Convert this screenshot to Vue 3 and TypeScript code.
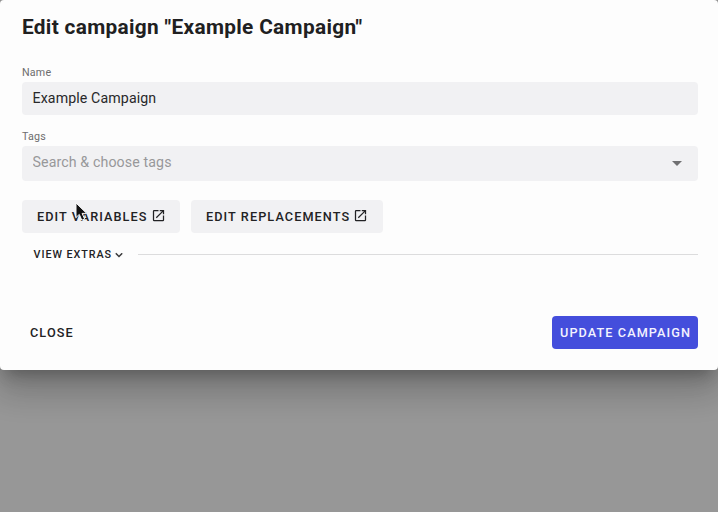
<script setup lang="ts">
import { ref } from 'vue'

interface Action {
  label: string
  kind: string
}

const campaignName = ref('Example Campaign')
const tagQuery = ref('')
const actions: Action[] = [
  { label: 'Edit variables', kind: 'variables' },
  { label: 'Edit replacements', kind: 'replacements' },
]
</script>

<template>
  <div class="backdrop">
    <section class="dialog" role="dialog">
      <h1 class="title">Edit campaign "{{ campaignName }}"</h1>

      <label class="label" for="name">Name</label>
      <div class="field name-field">
        <input id="name" v-model="campaignName" class="input" type="text" />
      </div>

      <label class="label tags-label" for="tags">Tags</label>
      <div class="field tags-field">
        <input id="tags" v-model="tagQuery" class="input" type="text" placeholder="Search &amp; choose tags" />
        <svg class="caret" viewBox="0 0 10 5"><path d="M0 0h10L5 5z" /></svg>
      </div>

      <div class="actions">
        <button v-for="a in actions" :key="a.kind" class="button tonal" :class="a.kind" type="button">
          <span>{{ a.label }}</span>
          <svg class="open-icon" viewBox="0 0 24 24">
            <path d="M14 3v2h3.59l-9.83 9.83 1.41 1.41L19 6.41V10h2V3m-2 16H5V5h7V3H5a2 2 0 0 0-2 2v14a2 2 0 0 0 2 2h14a2 2 0 0 0 2-2v-7h-2z" />
          </svg>
        </button>
      </div>

      <div class="extras">
        <button class="extras-toggle" type="button">
          <span>View extras</span>
          <svg class="chevron" viewBox="0 0 24 24"><path d="M7.41 8.58 12 13.17l4.59-4.59L18 10l-6 6-6-6z" /></svg>
        </button>
        <div class="rule"></div>
      </div>

      <footer class="footer">
        <button class="button close" type="button">Close</button>
        <button class="button primary" type="button">Update campaign</button>
      </footer>
    </section>
    <svg class="cursor" viewBox="0 0 14 20">
      <path d="M1 1v14.5l3.3-3.1 2.5 5.8 2.8-1.2-2.5-5.6h4.6z" />
    </svg>
  </div>
</template>

<style>
body {
  margin: 0;
  overflow: hidden;
}
</style>

<style scoped>
.backdrop {
  position: relative;
  height: 512px;
  overflow: hidden;
  background: #979797;
  font-family: Roboto, "Liberation Sans", sans-serif;
  color: #202021;
}
.dialog {
  box-sizing: border-box;
  width: 718px;
  height: 370px;
  padding: 15px 20px 0 22px;
  display: flex;
  flex-direction: column;
  background: #fdfdfd;
  border-radius: 4px;
  box-shadow:
    0 10px 14px -6px rgba(0, 0, 0, 0.24),
    0 22px 32px 2px rgba(0, 0, 0, 0.14),
    0 8px 38px 4px rgba(0, 0, 0, 0.12);
}
.title {
  margin: 0;
  height: 24px;
  line-height: 24px;
  font-size: 20.8px;
  font-weight: 700;
  letter-spacing: 0.33px;
  white-space: nowrap;
}
.label {
  margin-top: 27px;
  height: 14px;
  line-height: 14px;
  font-size: 10.7px;
  letter-spacing: 0.2px;
  color: #6d6d6e;
}
.tags-label {
  margin-top: 15px;
}
.field {
  box-sizing: border-box;
  margin-top: 2px;
  padding: 0 16px 0 10.5px;
  display: flex;
  align-items: center;
  background: #f1f1f3;
  border-radius: 4px;
}
.name-field {
  height: 33px;
}
.tags-field {
  height: 35px;
}
.input {
  flex: 1;
  min-width: 0;
  height: 22px;
  margin-bottom: 2px;
  padding: 0;
  border: 0;
  outline: 0;
  background: transparent;
  font: 14.2px/22px Roboto, "Liberation Sans", sans-serif;
  letter-spacing: 0.11px;
  color: #28282a;
}
.tags-field .input {
  margin-bottom: 3px;
}
.input::placeholder {
  color: #98989a;
  opacity: 1;
}
.caret {
  width: 10px;
  height: 5px;
  fill: #707072;
}
.actions {
  margin-top: 19px;
  display: flex;
  gap: 11px;
}
.button {
  box-sizing: border-box;
  height: 33px;
  padding: 0;
  border: 0;
  border-radius: 4px;
  display: flex;
  align-items: center;
  font: 500 12.7px/33px Roboto, "Liberation Sans", sans-serif;
  letter-spacing: 1.08px;
  text-transform: uppercase;
  white-space: nowrap;
  color: #222224;
  background: transparent;
}
.tonal {
  padding-left: 15px;
  background: #f1f1f3;
}
.variables {
  width: 158px;
}
.replacements {
  width: 192px;
}
.open-icon {
  width: 15px;
  height: 15px;
  margin: 0 0 2px 3px;
  fill: currentColor;
}
.extras {
  margin-top: 11px;
  height: 20px;
  display: flex;
  align-items: center;
}
.extras-toggle {
  width: 116px;
  padding: 1px 0 0 11.5px;
  border: 0;
  display: flex;
  align-items: center;
  background: transparent;
  font: 500 10.8px/21px Roboto, "Liberation Sans", sans-serif;
  letter-spacing: 0.93px;
  text-transform: uppercase;
  white-space: nowrap;
  color: #222224;
}
.chevron {
  width: 14px;
  height: 14px;
  fill: currentColor;
  stroke: currentColor;
  stroke-width: 0.5;
}
.rule {
  flex: 1;
  height: 1px;
  background: #dcdcdd;
}
.footer {
  margin-top: 52px;
  display: flex;
  justify-content: space-between;
}
.close {
  padding: 0 8px;
}
.primary {
  width: 146px;
  padding-left: 8px;
  color: #f3f3ff;
  background: #444edc;
}
.cursor {
  position: absolute;
  left: 75px;
  top: 202px;
  width: 14px;
  height: 20px;
  fill: #111;
  stroke: #f7f7f7;
  stroke-width: 1;
}
</style>
